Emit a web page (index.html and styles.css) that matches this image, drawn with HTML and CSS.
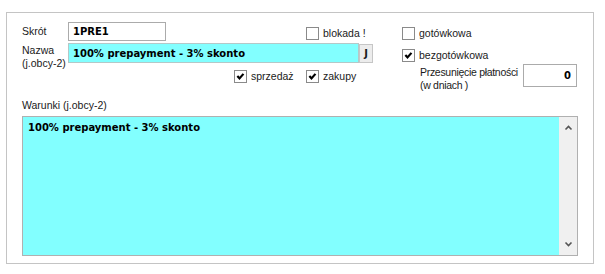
FILE: index.html
```html
<!DOCTYPE html>
<html lang="pl">
<head>
<meta charset="utf-8">
<link rel="stylesheet" href="styles.css">
</head>
<body>
<div class="panel">
  <div class="top">
    <span class="lbl skrot-lbl">Skrót</span>
    <div class="field skrot">1PRE1</div>
    <label class="chk c-blokada"><span class="box"></span>blokada !</label>
    <label class="chk c-got"><span class="box"></span>gotówkowa</label>

    <span class="lbl nazwa-lbl">Nazwa<br>(j.obcy-2)</span>
    <div class="nazwa-wrap">
      <div class="field cyan nazwa">100% prepayment - 3% skonto</div>
      <div class="jbtn">J</div>
    </div>
    <label class="chk c-bez"><span class="box"><svg viewBox="0 0 13 13"><path d="M2.8 6 L5.3 8.8 L10 3.4"/></svg></span>bezgotówkowa</label>

    <label class="chk c-sprz"><span class="box"><svg viewBox="0 0 13 13"><path d="M2.8 6 L5.3 8.8 L10 3.4"/></svg></span>sprzedaż</label>
    <label class="chk c-zak"><span class="box"><svg viewBox="0 0 13 13"><path d="M2.8 6 L5.3 8.8 L10 3.4"/></svg></span>zakupy</label>
    <div class="przes">
      <span class="przes-lbl">Przesunięcie płatności<br>(w dniach )</span>
      <div class="field num">0</div>
    </div>
  </div>

  <div class="lbl warunki-lbl">Warunki (j.obcy-2)</div>
  <div class="memo">
    <div class="memo-text">100% prepayment - 3% skonto</div>
    <div class="scroll">
      <svg class="arr" viewBox="0 0 9 6"><path d="M1.5 4.5 L4.5 1.5 L7.5 4.5"/></svg>
      <svg class="arr" viewBox="0 0 9 6"><path d="M1.5 1.5 L4.5 4.5 L7.5 1.5"/></svg>
    </div>
  </div>
</div>
</body>
</html>
```

FILE: styles.css
```css
html, body {
  margin: 0;
  padding: 0;
  background: #ffffff;
}

body {
  font-family: "Liberation Sans", Arial, sans-serif;
  font-size: 10.5px;
  color: #1a1a1a;
}

.panel {
  margin: 12px 0 0 6px;
  width: 588px;
  box-sizing: border-box;
  border: 1px solid #c4c4c4;
  padding: 9px 0 7px 15px;
}

.top {
  display: grid;
  grid-template-columns: 46px 238px 96px 175px;
  grid-template-rows: 19px 20px 23px;
  row-gap: 2px;
}

.lbl {
  line-height: 13px;
}

.skrot-lbl {
  grid-column: 1;
  grid-row: 1;
  align-self: center;
}

.field {
  box-sizing: border-box;
  border: 1px solid #ababab;
  background: #ffffff;
  font-family: "DejaVu Sans", Verdana, sans-serif;
  font-weight: bold;
  font-size: 10px;
  color: #000;
  display: flex;
  align-items: center;
  padding-left: 4px;
}

.skrot {
  grid-column: 2;
  grid-row: 1;
  width: 98px;
  height: 19px;
}

.chk {
  display: flex;
  align-items: center;
  gap: 4px;
  line-height: 13px;
  align-self: start;
  justify-self: start;
}

.box {
  width: 13px;
  height: 13px;
  box-sizing: border-box;
  border: 1px solid #8a8a8a;
  background: #fff;
  display: flex;
  flex: none;
}

.box svg {
  width: 11px;
  height: 11px;
}

.box path {
  fill: none;
  stroke: #000;
  stroke-width: 2.6;
}

.c-blokada {
  grid-column: 3;
  grid-row: 1;
  margin-top: 5px;
}

.c-got {
  grid-column: 4;
  grid-row: 1;
  margin-top: 5px;
}

.nazwa-lbl {
  grid-column: 1;
  grid-row: 2 / span 2;
  align-self: start;
  margin-top: 1px;
}

.nazwa-wrap {
  grid-column: 2 / span 2;
  grid-row: 2;
  display: flex;
  align-items: center;
  width: 305px;
}

.cyan {
  background: #82ffff;
  border-color: #b4c8c8;
}

.nazwa {
  width: 291px;
  height: 20px;
}

.jbtn {
  width: 14px;
  height: 19px;
  box-sizing: border-box;
  border: 1px solid #c6c6c6;
  background: #ececec;
  font-family: "DejaVu Sans", Verdana, sans-serif;
  font-weight: bold;
  font-size: 10px;
  display: flex;
  align-items: center;
  justify-content: center;
}

.c-bez {
  grid-column: 4;
  grid-row: 2;
  margin-top: 6px;
}

.c-sprz {
  grid-column: 2;
  grid-row: 3;
  margin-left: 166px;
  margin-top: 5px;
}

.c-zak {
  grid-column: 3;
  grid-row: 3;
  margin-top: 5px;
}

.przes {
  grid-column: 4;
  grid-row: 3;
  display: flex;
  align-items: flex-start;
  padding-left: 18px;
  margin-top: -1px;
}

.przes-lbl {
  width: 103px;
  line-height: 13px;
  font-size: 10.5px;
  letter-spacing: -0.3px;
  margin-top: 2px;
}

.num {
  width: 54px;
  height: 23px;
  justify-content: flex-end;
  padding: 0 5px 0 0;
}

.warunki-lbl {
  margin-top: 11px;
}

.memo {
  margin-top: 4px;
  width: 556px;
  height: 140px;
  box-sizing: border-box;
  border: 1px solid #b0b0b0;
  display: flex;
}

.memo-text {
  flex: 1;
  background: #82ffff;
  font-family: "DejaVu Sans", Verdana, sans-serif;
  font-weight: bold;
  font-size: 10px;
  color: #000;
  padding: 5px 0 0 5px;
}

.scroll {
  width: 18px;
  background: #f0f0f0;
  display: flex;
  flex-direction: column;
  justify-content: space-between;
  align-items: center;
  padding: 8px 0 8px;
}

.arr {
  width: 9px;
  height: 6px;
}

.arr path {
  fill: none;
  stroke: #555;
  stroke-width: 1.6;
}
```
